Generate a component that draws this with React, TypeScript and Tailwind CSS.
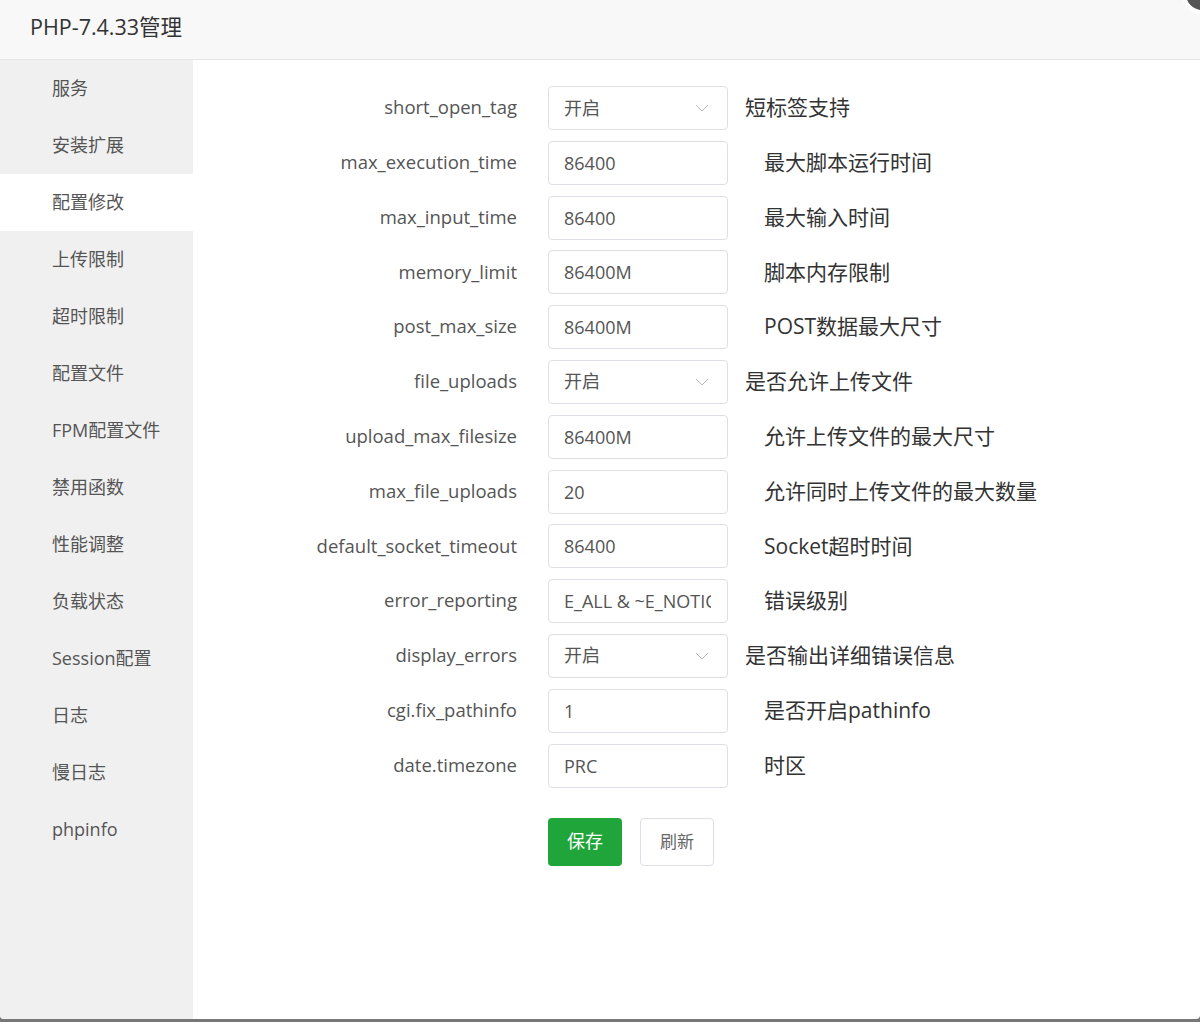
const menu = [
  "服务",
  "安装扩展",
  "配置修改",
  "上传限制",
  "超时限制",
  "配置文件",
  "FPM配置文件",
  "禁用函数",
  "性能调整",
  "负载状态",
  "Session配置",
  "日志",
  "慢日志",
  "phpinfo",
];

type Row = { name: string; value: string; desc: string; select?: boolean };

const rows: Row[] = [
  { name: "short_open_tag", value: "开启", desc: "短标签支持", select: true },
  { name: "max_execution_time", value: "86400", desc: "最大脚本运行时间" },
  { name: "max_input_time", value: "86400", desc: "最大输入时间" },
  { name: "memory_limit", value: "86400M", desc: "脚本内存限制" },
  { name: "post_max_size", value: "86400M", desc: "POST数据最大尺寸" },
  { name: "file_uploads", value: "开启", desc: "是否允许上传文件", select: true },
  { name: "upload_max_filesize", value: "86400M", desc: "允许上传文件的最大尺寸" },
  { name: "max_file_uploads", value: "20", desc: "允许同时上传文件的最大数量" },
  { name: "default_socket_timeout", value: "86400", desc: "Socket超时时间" },
  { name: "error_reporting", value: "E_ALL & ~E_NOTICE", desc: "错误级别" },
  { name: "display_errors", value: "开启", desc: "是否输出详细错误信息", select: true },
  { name: "cgi.fix_pathinfo", value: "1", desc: "是否开启pathinfo" },
  { name: "date.timezone", value: "PRC", desc: "时区" },
];

function Chevron() {
  return (
    <svg width="14" height="8" viewBox="0 0 14 8" fill="none">
      <path d="M1 1l6 6 6-6" stroke="#b8b8b8" strokeWidth="1" />
    </svg>
  );
}

export default function App() {
  return (
    <div
      className="relative w-[1200px] h-[1022px] bg-[#777777] overflow-hidden"
      style={{ fontFamily: '"Open Sans", "Noto Sans CJK SC", sans-serif' }}
    >
      <div className="h-[1019px] bg-white rounded-b-[4px] overflow-hidden flex flex-col">
        {/* Header */}
        <div className="h-[60px] shrink-0 bg-[#f8f8f8] border-b border-[#e6e6e6] flex items-center pl-[30px] pb-[5px] text-[21.5px] text-[#333]">
          PHP-7.4.33管理
        </div>

        <div className="flex flex-1">
          {/* Sidebar */}
          <div className="w-[193px] shrink-0 bg-[#f0f0f0] flex flex-col">
            {menu.map((m) => (
              <div
                key={m}
                className={
                  m === "配置修改"
                    ? "h-[57px] flex items-center pl-[52px] text-[18px] text-[#555] bg-white"
                    : "h-[57px] flex items-center pl-[52px] text-[18px] text-[#555]"
                }
              >
                {m}
              </div>
            ))}
          </div>

          {/* Content */}
          <div className="flex-1 pt-[26px]">
            <div className="flex flex-col gap-[10.8px]">
              {rows.map((r) => (
                <div key={r.name} className="flex items-center h-[44px]">
                  <div className="w-[324px] text-right text-[18.5px] text-[#555] pb-[2px]">{r.name}</div>
                  {r.select ? (
                    <div className="ml-[31px] w-[180px] h-[44px] border border-[#dcdfe6] rounded-[4px] flex items-center pl-[15px] pr-[18px] text-[18px] text-[#555]">
                      <span className="flex-1">{r.value}</span>
                      <Chevron />
                    </div>
                  ) : (
                    <input
                      readOnly
                      value={r.value}
                      className="ml-[31px] w-[180px] h-[44px] border border-[#dcdfe6] rounded-[4px] pl-[15px] pr-[16px] text-[18px] text-[#555] outline-none"
                    />
                  )}
                  <div
                    className={
                      r.select
                        ? "ml-[17px] text-[21px] text-[#333]"
                        : "ml-[36px] text-[21px] text-[#333]"
                    }
                  >
                    {r.desc}
                  </div>
                </div>
              ))}
            </div>

            <div className="flex gap-[18px] ml-[355px] mt-[30px]">
              <button className="w-[74px] h-[48px] rounded-[4px] bg-[#20a53a] text-white text-[18px]">
                保存
              </button>
              <button className="w-[74px] h-[48px] rounded-[4px] bg-white border border-[#dcdfe6] text-[#666] text-[17px]">
                刷新
              </button>
            </div>
          </div>
        </div>
      </div>

      {/* close button */}
      <div className="absolute right-[-22px] top-[-26px] w-[40px] h-[40px] rounded-full bg-[#555] border-[4px] border-white" />
    </div>
  );
}
